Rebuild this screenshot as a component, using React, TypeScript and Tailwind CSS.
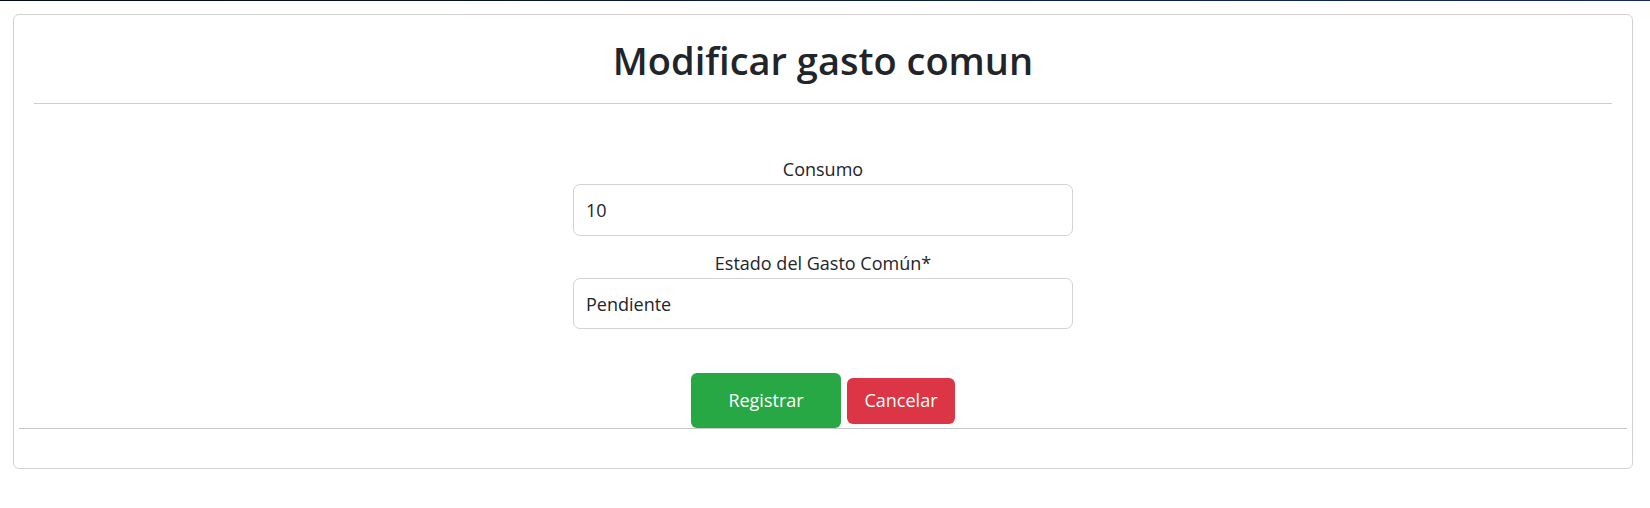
import { useState } from 'react';

export default function App() {
  const [consumo, setConsumo] = useState('10');
  const [estado, setEstado] = useState('Pendiente');

  return (
    <div className="min-h-screen bg-white font-['Open_Sans',sans-serif] text-[#212529]">
      <div className="h-px bg-gradient-to-r from-[#03081a] via-[#0a1a45] to-[#122a6a]" />

      <div className="ml-[13px] mt-[13px] flex h-[455px] w-[1620px] flex-col rounded-[6px] border border-[#d2d2d2]">
        <div className="px-[20px]">
          <h1 className="mt-[21px] h-[48px] text-center text-[38px] font-semibold leading-[48px]">
            Modificar gasto comun
          </h1>
          <hr className="mt-[19px] border-t border-[#cdcdcd]" />
        </div>

        <form className="mt-[52px] flex flex-col items-center" onSubmit={(e) => e.preventDefault()}>
          <label htmlFor="consumo" className="h-[27px] text-[18px] leading-[27px]">Consumo</label>
          <input
            id="consumo"
            value={consumo}
            onChange={(e) => setConsumo(e.target.value)}
            className="mt-[1px] h-[52px] w-[500px] rounded-[7px] border border-[#d0d4d8] px-[12px] text-[18px] outline-none"
          />

          <label htmlFor="estado" className="mt-[14px] h-[27px] text-[18px] leading-[27px]">Estado del Gasto Común*</label>
          <input
            id="estado"
            value={estado}
            onChange={(e) => setEstado(e.target.value)}
            className="mt-[1px] h-[51px] w-[500px] rounded-[7px] border border-[#d0d4d8] px-[12px] text-[18px] outline-none"
          />

          <div className="mt-[44px] flex items-center gap-[6px]">
            <button type="submit" className="h-[55px] w-[150px] rounded-[6px] bg-[#28a745] text-[18px] text-white">
              Registrar
            </button>
            <button type="button" className="h-[46px] w-[108px] rounded-[6px] bg-[#dc3545] text-[18px] text-white">
              Cancelar
            </button>
          </div>
        </form>

        <hr className="mx-[5px] border-t border-[#c8c8c8]" />
      </div>
    </div>
  );
}
